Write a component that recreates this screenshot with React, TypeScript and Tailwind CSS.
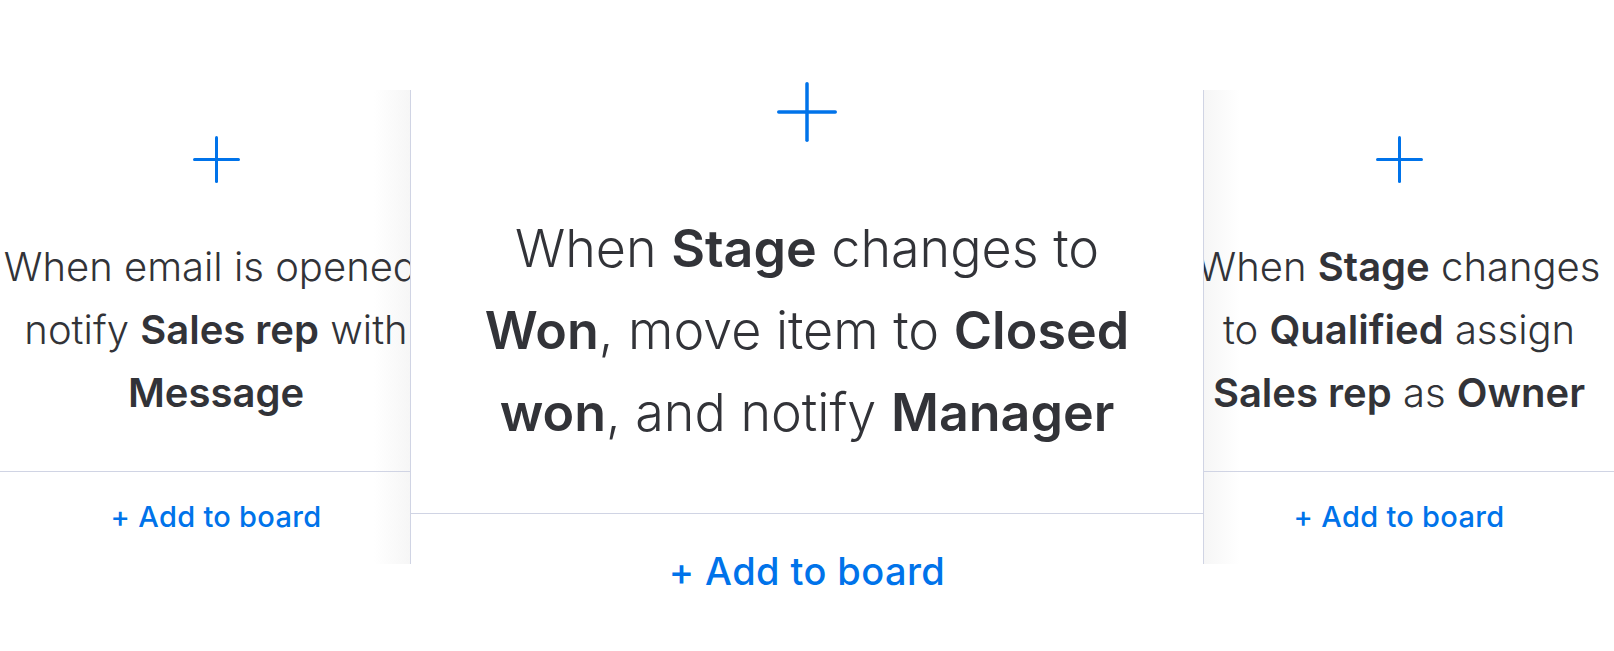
const font = { fontFamily: "Inter, 'Noto Sans', sans-serif" };

function Plus({ size, stroke }: { size: number; stroke: number }) {
  return (
    <svg width={size} height={size} viewBox={`0 0 ${size} ${size}`} fill="none">
      <line x1={size / 2} y1={stroke / 2} x2={size / 2} y2={size - stroke / 2} stroke="#0073ea" strokeWidth={stroke} strokeLinecap="round" />
      <line x1={stroke / 2} y1={size / 2} x2={size - stroke / 2} y2={size / 2} stroke="#0073ea" strokeWidth={stroke} strokeLinecap="round" />
    </svg>
  );
}

function SideCard({ lines, offset }: { lines: React.ReactNode[]; offset: string }) {
  return (
    <div className={`relative w-[610px] shrink-0 flex flex-col items-center ${offset}`}>
      <div className="pt-[46px]">
        <Plus size={47} stroke={3} />
      </div>
      <div className="mt-[52px] text-[40px] leading-[63px] font-light text-[#323338] text-center whitespace-nowrap">
        {lines.map((l, i) => (
          <div key={i}>{l}</div>
        ))}
      </div>
      <div className="mt-[47px] w-full h-px bg-[#d0d4e4]" />
      <div className="mt-[29px] text-[29px] leading-[32px] font-medium tracking-[0.3px] text-[#0073ea]">+ Add to board</div>
    </div>
  );
}

export default function App() {
  return (
    <div className="w-[1614px] h-[651px] bg-white flex items-start overflow-hidden" style={font}>
      {/* left card, partly hidden */}
      <div className="relative mt-[90px] w-[411px] h-[474px] shrink-0 overflow-hidden border-r border-[#d0d4e4] flex">
        <div className="absolute right-0 top-0 h-full w-[36px] bg-gradient-to-l from-[#f6f6f6] to-transparent" />
        <SideCard
          offset="ml-[-89px]"
          lines={[
            <>When email is opened,</>,
            <>notify <b className="font-semibold">Sales rep</b> with</>,
            <b className="font-semibold">Message</b>,
          ]}
        />
      </div>

      {/* active card */}
      <div className="w-[792px] shrink-0 flex flex-col items-center bg-white">
        <div className="pt-[82px]">
          <Plus size={60} stroke={3.5} />
        </div>
        <div className="mt-[66px] text-[52px] leading-[82px] font-light text-[#323338] text-center whitespace-nowrap">
          <div>When <b className="font-semibold">Stage</b> changes to</div>
          <div><b className="font-semibold">Won</b>, move item to <b className="font-semibold">Closed</b></div>
          <div><b className="font-semibold">won</b>, and notify <b className="font-semibold">Manager</b></div>
        </div>
        <div className="mt-[59px] w-full h-px bg-[#d0d4e4]" />
        <div className="mt-[36px] text-[38px] leading-[42px] font-medium tracking-[0.4px] text-[#0073ea]">+ Add to board</div>
      </div>

      {/* right card, partly hidden */}
      <div className="relative mt-[90px] w-[411px] h-[474px] shrink-0 overflow-hidden border-l border-[#d0d4e4] flex">
        <div className="absolute left-0 top-0 h-full w-[36px] bg-gradient-to-r from-[#f6f6f6] to-transparent" />
        <SideCard
          offset="ml-[-110px]"
          lines={[
            <>When <b className="font-semibold">Stage</b> changes</>,
            <>to <b className="font-semibold">Qualified</b> assign</>,
            <><b className="font-semibold">Sales rep</b> as <b className="font-semibold">Owner</b></>,
          ]}
        />
      </div>
    </div>
  );
}
